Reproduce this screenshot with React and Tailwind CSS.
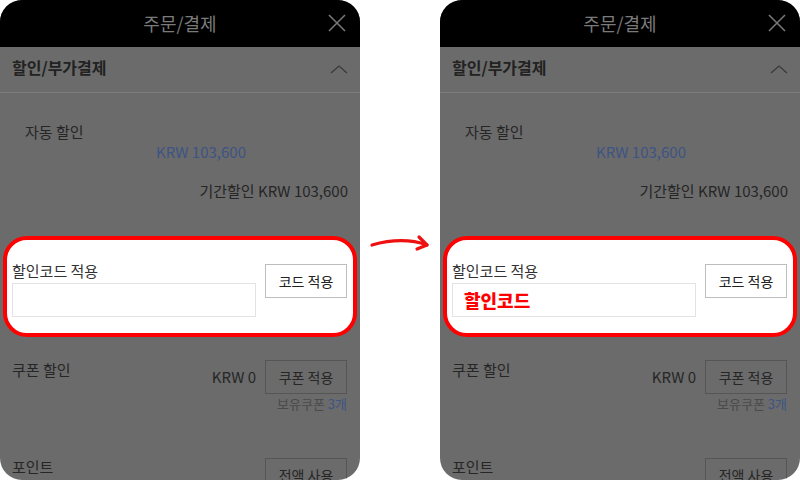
import React from "react";

const font = { fontFamily: '"Noto Sans CJK KR", "Noto Sans", sans-serif' };

function Panel({ filled }) {
  return (
    <div className="w-[360px] h-[480px] shrink-0 rounded-[22px] overflow-hidden bg-[#6b6b6b] flex flex-col">
      <div className="h-[47px] bg-black flex items-center justify-center relative shrink-0">
        <span className="text-[18px] text-[#7a7a7a]">주문/결제</span>
        <svg className="absolute right-[13px] top-[13px]" width="20" height="20" viewBox="0 0 20 20">
          <path d="M2 2 L18 18 M18 2 L2 18" stroke="#777" strokeWidth="1.6" fill="none" />
        </svg>
      </div>
      <div className="h-[46px] border-b border-[#7c7c7c] flex items-center justify-between pl-[12px] pr-[12px] pb-[5px] shrink-0">
        <span className="text-[16px] font-bold text-[#222]">할인/부가결제</span>
        <svg width="18" height="10" viewBox="0 0 18 10" className="mt-[3px]">
          <path d="M1 9 L9 2 L17 9" stroke="#3a3a3a" strokeWidth="1.3" fill="none" />
        </svg>
      </div>
      <div className="flex flex-col">
        <div className="pl-[25px] pt-[28px] text-[15px] leading-[22px] text-[#262626]">자동 할인</div>
        <div className="pl-[156px] text-[15px] leading-[18px] text-[#3d5485]">KRW 103,600</div>
        <div className="pr-[12px] pt-[20px] text-right text-[15px] leading-[20px] text-[#262626]">기간할인 KRW 103,600</div>
        <div className="mx-[3px] mt-[35px] h-[101px] rounded-[24px] border-[4px] border-[#ff0000] bg-white flex items-start pl-[5px] pr-[6px]">
          <div className="flex flex-col pt-[22px]">
            <span className="text-[15px] leading-[18px] text-[#333]">할인코드 적용</span>
            <div className="mt-[3px] w-[244px] h-[34px] border border-[#e3e3e3] flex items-center pl-[11px]">
              {filled && <span className="text-[18px] font-black text-[#ff0000]">할인코드</span>}
            </div>
          </div>
          <button className="ml-[9px] mt-[24px] w-[82px] h-[34px] border border-[#bdbdbd] bg-white text-[14px] text-[#222]">코드 적용</button>
        </div>
        <div className="flex justify-between pl-[12px] pr-[13px] pt-[22px]">
          <span className="text-[15px] leading-[22px] text-[#262626]">쿠폰 할인</span>
          <div className="flex flex-col items-end">
            <div className="flex items-center gap-[9px] mt-[1px]">
              <span className="text-[15px] text-[#262626]">KRW 0</span>
              <button className="w-[82px] h-[34px] border border-[#555] text-[14px] text-[#262626]">쿠폰 적용</button>
            </div>
            <span className="text-[13px] leading-[16px] mt-[2px] text-[#4a4a4a]">
              보유쿠폰 <span className="text-[#3d5485]">3개</span>
            </span>
          </div>
        </div>
        <div className="flex justify-between items-start pl-[12px] pr-[13px] pt-[40px]">
          <span className="text-[15px] leading-[22px] text-[#262626] mt-[4px]">포인트</span>
          <button className="mt-[6px] w-[82px] h-[34px] border border-[#555] text-[14px] text-[#262626]">전액 사용</button>
        </div>
      </div>
    </div>
  );
}

export default function App() {
  return (
    <div className="w-[800px] h-[480px] bg-white flex overflow-hidden" style={font}>
      <Panel filled={false} />
      <div className="w-[80px] shrink-0 flex items-start justify-center pt-[232px]">
        <svg width="64" height="22" viewBox="0 0 64 22">
          <path d="M4 13 C 22 8, 42 7, 59 13" stroke="#ee1111" strokeWidth="3.2" fill="none" strokeLinecap="round" />
          <path d="M51 5 L59 13 L49 17" stroke="#ee1111" strokeWidth="3.2" fill="none" strokeLinecap="round" strokeLinejoin="round" />
        </svg>
      </div>
      <Panel filled />
    </div>
  );
}
